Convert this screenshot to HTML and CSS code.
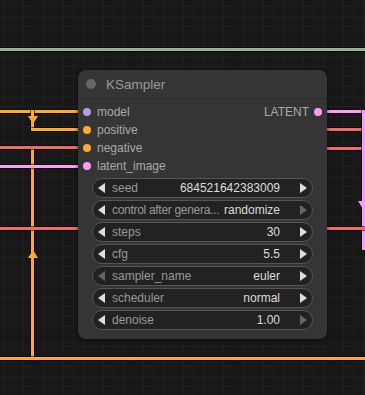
FILE: index.html
```html
<!DOCTYPE html>
<html lang="en">

<head>
    <meta charset="utf-8">
    <meta name="viewport" content="width=device-width, initial-scale=1.0">
    <title>KSampler</title>
    <link rel="stylesheet" href="styles.css">
</head>

<body>
    <div class="canvas">
        <!-- links -->
        <div class="link h green" style="left:0;top:48px;width:365px"></div>

        <div class="link h orange" style="left:0;top:110px;width:78px"></div>
        <div class="link v orange" style="left:31px;top:110px;height:20px"></div>
        <div class="link h orange" style="left:31px;top:128px;width:47px"></div>
        <div class="link v orange" style="left:31px;top:148px;height:211px"></div>
        <div class="link h red" style="left:0;top:146px;width:78px"></div>
        <div class="link h pink" style="left:0;top:165px;width:78px"></div>
        <div class="link h red" style="left:0;top:227px;width:78px"></div>
        <div class="link h orange" style="left:0;top:357px;width:365px"></div>

        <div class="link h pink" style="left:322px;top:110px;width:43px"></div>
        <div class="link h red" style="left:327px;top:128px;width:35px"></div>
        <div class="link h red" style="left:327px;top:147px;width:35px"></div>
        <div class="link v pink" style="left:362px;top:110px;height:140px"></div>
        <div class="link h red" style="left:327px;top:227px;width:38px"></div>

        <svg class="arrow" style="left:28px;top:115px" width="10" height="10" viewBox="0 0 10 10">
            <polygon points="0,1 10,1 5,9" fill="#ffa931" />
        </svg>
        <svg class="arrow" style="left:28px;top:249px" width="10" height="10" viewBox="0 0 10 10">
            <polygon points="0,9 10,9 5,1" fill="#ffa931" />
        </svg>
        <svg class="arrow" style="left:358px;top:200px" width="10" height="10" viewBox="0 0 10 10">
            <polygon points="0,1 10,1 5,9" fill="#ff9cf9" />
        </svg>

        <div class="node">
            <div class="node-title">
                <span class="title-dot"></span>
                <span class="title-text">KSampler</span>
            </div>

            <div class="slots">
                <div class="slot">
                    <span class="dot model"></span><span class="slot-name">model</span>
                    <span class="slot-out">LATENT</span><span class="dot latent"></span>
                </div>
                <div class="slot"><span class="dot cond"></span><span class="slot-name">positive</span></div>
                <div class="slot"><span class="dot cond"></span><span class="slot-name">negative</span></div>
                <div class="slot"><span class="dot latent"></span><span class="slot-name">latent_image</span></div>
            </div>

            <div class="widgets">
                <div class="widget">
                    <span class="arr left"></span><span class="label">seed</span>
                    <span class="value">684521642383009</span><span class="arr right"></span>
                </div>
                <div class="widget">
                    <span class="arr left"></span><span class="label tight">control after genera...</span>
                    <span class="value">randomize</span><span class="arr right off"></span>
                </div>
                <div class="widget">
                    <span class="arr left"></span><span class="label">steps</span>
                    <span class="value">30</span><span class="arr right"></span>
                </div>
                <div class="widget">
                    <span class="arr left"></span><span class="label">cfg</span>
                    <span class="value">5.5</span><span class="arr right"></span>
                </div>
                <div class="widget">
                    <span class="arr left off"></span><span class="label">sampler_name</span>
                    <span class="value">euler</span><span class="arr right"></span>
                </div>
                <div class="widget">
                    <span class="arr left"></span><span class="label">scheduler</span>
                    <span class="value">normal</span><span class="arr right"></span>
                </div>
                <div class="widget">
                    <span class="arr left"></span><span class="label">denoise</span>
                    <span class="value">1.00</span><span class="arr right off"></span>
                </div>
            </div>
        </div>
    </div>
</body>

</html>
```

FILE: styles.css
```css
body {
    margin: 0;
    background: #181818;
    font-family: "Liberation Sans", Arial, sans-serif;
}

.canvas {
    position: relative;
    width: 365px;
    height: 395px;
    overflow: hidden;
    background-color: #181818;
    background-image:
        linear-gradient(#131313 1px, transparent 1px),
        linear-gradient(90deg, #131313 1px, transparent 1px),
        linear-gradient(#1f1f1f 1px, transparent 1px),
        linear-gradient(90deg, #1f1f1f 1px, transparent 1px);
    background-size: 100px 100px, 100px 100px, 10px 10px, 10px 10px;
    background-position: 0 36px, 33px 0, 0 6px, 3px 0;
}

/* links */
.link {
    position: absolute;
    box-shadow: 0 0 0 1px rgba(0, 0, 0, 0.55);
}

.link.h {
    height: 3px;
}

.link.v {
    width: 3px;
}

.green {
    background: #9aae99;
}

.orange {
    background: #ffa931;
}

.red {
    background: #f06a68;
}

.pink {
    background: #ff9cf9;
}

.arrow {
    position: absolute;
}

/* node */
.node {
    position: absolute;
    left: 78px;
    top: 70px;
    width: 249px;
    height: 269px;
    background: #353535;
    border-radius: 8px;
    box-shadow: 0 1px 4px rgba(0, 0, 0, 0.6);
}

.node-title {
    height: 28px;
    display: flex;
    align-items: center;
    padding-left: 8px;
    border-bottom: 1px solid #2c2c2c;
}

.title-dot {
    width: 10px;
    height: 10px;
    border-radius: 50%;
    background: #666;
    margin-right: 10px;
}

.title-text {
    color: #999;
    font-size: 13.5px;
}

.slots {
    padding-top: 4px;
    margin-bottom: 3px;
}

.slot {
    height: 18px;
    display: flex;
    align-items: center;
    padding: 0 5px;
    font-size: 12px;
    color: #aaa;
}

.dot {
    width: 8px;
    height: 8px;
    border-radius: 50%;
}

.slot-name {
    margin-left: 6px;
}

.slot-out {
    margin-left: auto;
    margin-right: 5px;
}

.model {
    background: #b39ddb;
}

.cond {
    background: #ffa931;
}

.latent {
    background: #ff9cf9;
}

/* widgets */
.widgets {
    display: flex;
    flex-direction: column;
    gap: 2px;
    padding: 0 14px;
}

.widget {
    height: 20px;
    box-sizing: border-box;
    display: flex;
    align-items: center;
    padding: 0 5px;
    background: #222;
    border: 1px solid #555;
    border-radius: 10px;
    font-size: 12px;
}

.arr {
    width: 0;
    height: 0;
    border-top: 5px solid transparent;
    border-bottom: 5px solid transparent;
    flex: none;
}

.arr.left {
    border-right: 7px solid #ddd;
    margin-right: 7px;
}

.arr.right {
    border-left: 7px solid #ddd;
    margin-left: 20px;
}

.arr.left.off {
    border-right-color: #666;
}

.arr.right.off {
    border-left-color: #666;
}

.label {
    color: #999;
    white-space: nowrap;
    flex: 1;
}

.label.tight {
    letter-spacing: -0.3px;
}

.value {
    color: #ddd;
    margin-left: 4px;
    white-space: nowrap;
}
```
